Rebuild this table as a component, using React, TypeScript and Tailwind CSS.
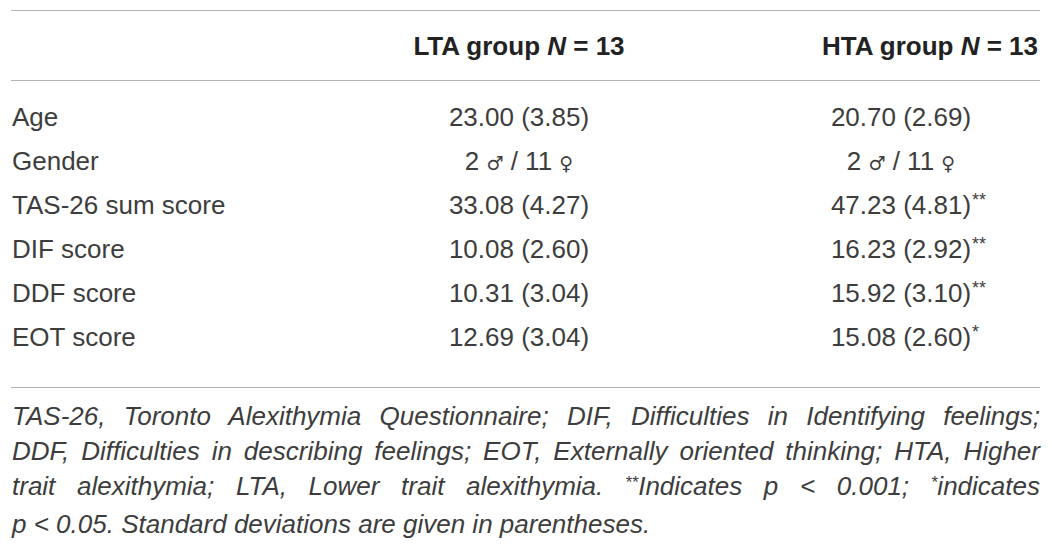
const rows = [
  { label: "Age", lta: "23.00 (3.85)", hta: "20.70 (2.69)", sig: "" },
  { label: "Gender", lta: "gender", hta: "gender", sig: "" },
  { label: "TAS-26 sum score", lta: "33.08 (4.27)", hta: "47.23 (4.81)", sig: "**" },
  { label: "DIF score", lta: "10.08 (2.60)", hta: "16.23 (2.92)", sig: "**" },
  { label: "DDF score", lta: "10.31 (3.04)", hta: "15.92 (3.10)", sig: "**" },
  { label: "EOT score", lta: "12.69 (3.04)", hta: "15.08 (2.60)", sig: "*" },
];

const Gender = () => (
  <span>
    2 <span className="text-[19px] font-['DejaVu_Sans',sans-serif]">♂</span> / 11{" "}
    <span className="text-[19px] font-['DejaVu_Sans',sans-serif]">♀</span>
  </span>
);

const Value = ({ text, sig }: { text: string; sig?: string }) => {
  if (text === "gender") return <Gender />;
  return (
    <span className="relative">
      {text}
      {sig ? <span className="absolute left-full top-[1px] pl-[1px] text-[18px]">{sig}</span> : null}
    </span>
  );
};

export default function App() {
  return (
    <div className="w-[1052px] h-[556px] bg-white pt-[10px] pl-[11px] pr-[12px] text-[#3d3d3d] font-['Liberation_Sans',Arial,sans-serif] text-[26px] leading-none">
      <div className="border-t border-[#b4b4b4]">
        <div className="grid grid-cols-[379px_258px_1fr_270px] h-[70px] items-center border-b border-[#b4b4b4] font-bold text-[#222]">
          <div />
          <div className="text-center">
            LTA group <i>N</i> = 13
          </div>
          <div />
          <div className="text-right pr-[2px]">
            HTA group <i>N</i> = 13
          </div>
        </div>
        <div className="pt-[14px] pb-[28px] border-b border-[#b4b4b4]">
          {rows.map((r) => (
            <div key={r.label} className="grid grid-cols-[379px_258px_1fr_270px] h-[44px] items-center">
              <div className="pl-[1px]">{r.label}</div>
              <div className="text-center">
                <Value text={r.lta} />
              </div>
              <div />
              <div className="text-center pr-[8px]">
                <Value text={r.hta} sig={r.sig} />
              </div>
            </div>
          ))}
        </div>
        <div className="pt-[11px] italic text-[26px] leading-[35px] pl-[1px]">
          <div className="whitespace-nowrap [text-align-last:justify]">
            TAS-26, Toronto Alexithymia Questionnaire; DIF, Difficulties in Identifying feelings;
          </div>
          <div className="whitespace-nowrap [text-align-last:justify]">
            DDF, Difficulties in describing feelings; EOT, Externally oriented thinking; HTA, Higher
          </div>
          <div className="whitespace-nowrap [text-align-last:justify]">
            trait alexithymia; LTA, Lower trait alexithymia.{" "}
            <span className="relative top-[-7px] text-[17px]">**</span>Indicates p &lt; 0.001;{" "}
            <span className="relative top-[-7px] text-[17px]">*</span>indicates
          </div>
          <div className="whitespace-nowrap">
            p &lt; 0.05. Standard deviations are given in parentheses.
          </div>
        </div>
      </div>
    </div>
  );
}
